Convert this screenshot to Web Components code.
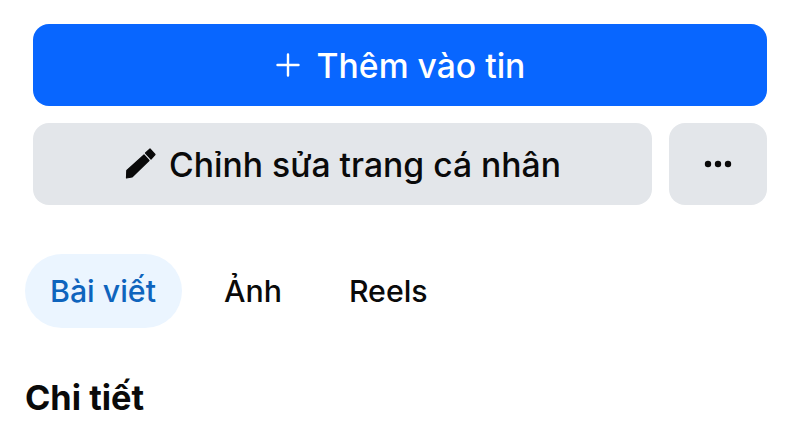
<!DOCTYPE html>
<html lang="vi">
<head>
<meta charset="utf-8">
<title>Trang cá nhân</title>
<style>
    html, body { margin: 0; background: #ffffff; }
    body { font-family: Inter, "Noto Sans", sans-serif; }
</style>
</head>
<body>
<profile-panel>
    <action-row>
        <action-button variant="primary" grow>
            <svg slot="icon" width="26" height="26" viewBox="0 0 26 26"><path d="M13 2.500V23.500M2.500 13H23.500" stroke="#fff" stroke-width="2.400" stroke-linecap="round" fill="none"/></svg>
            Thêm vào tin
        </action-button>
    </action-row>
    <action-row>
        <action-button grow>
            <svg slot="icon" width="34" height="34" viewBox="0 0 34 34"><path d="M2.800 23.500L20 8 25 13.500 8 30 2.500 31Z M21.500 6L26 2 31 7.500 27 12Z" fill="#0a0a0a" stroke="#0a0a0a" stroke-width="1.200" stroke-linejoin="round"/></svg>
            Chỉnh sửa trang cá nhân
        </action-button>
        <action-button square>
            <svg width="28" height="8" viewBox="0 0 28 8"><circle cx="4" cy="4" r="3.200" fill="#0a0a0a"/><circle cx="14" cy="4" r="3.200" fill="#0a0a0a"/><circle cx="24" cy="4" r="3.200" fill="#0a0a0a"/></svg>
        </action-button>
    </action-row>
    <tab-bar>
        <tab-item active>Bài viết</tab-item>
        <tab-item>Ảnh</tab-item>
        <tab-item>Reels</tab-item>
    </tab-bar>
    <section-title>Chi tiết</section-title>
</profile-panel>

<script>
(function () {

    function define(name, css, html) {
        const template = document.createElement('template');
        template.innerHTML = `<style>${css}</style>${html}`;
        customElements.define(name, class extends HTMLElement {
            constructor() {
                super();
                this.attachShadow({ mode: 'open' });
                this.shadowRoot.appendChild(template.content.cloneNode(true));
            }
        });
    }

    define('profile-panel', `
        :host {
            display: flex;
            flex-direction: column;
            box-sizing: border-box;
            width: 800px;
            height: 440px;
            padding: 24px 33px 0 33px;
            overflow: hidden;
            color: #0a0a0a;
        }
    `, `<slot></slot>`);

    define('action-row', `
        :host {
            display: flex;
            gap: 17px;
            margin-bottom: 17px;
        }
    `, `<slot></slot>`);

    define('action-button', `
        :host {
            display: flex;
            align-items: center;
            justify-content: center;
            gap: 11px;
            height: 82px;
            border-radius: 16px;
            background: #e3e6ea;
            color: #0a0a0a;
            font-size: 33.700px;
            font-weight: 500;
        }
        :host([grow]) { flex: 1; }
        :host([square]) { width: 98px; gap: 0; }
        :host([variant="primary"]) {
            background: #0866ff;
            color: #ffffff;
            gap: 16px;
        }
        slot[name="icon"] { display: flex; }
    `, `<slot name="icon"></slot><slot></slot>`);

    define('tab-bar', `
        :host {
            display: flex;
            align-items: center;
            gap: 17px;
            margin: 32px 0 0 -8px;
        }
    `, `<slot></slot>`);

    define('tab-item', `
        :host {
            display: flex;
            align-items: center;
            height: 74px;
            padding: 0 25px;
            border-radius: 37px;
            font-size: 30.300px;
            font-weight: 500;
            color: #0a0a0a;
        }
        :host([active]) {
            padding-right: 26px;
            background: #ebf5ff;
            color: #0e64bd;
        }
    `, `<slot></slot>`);

    define('section-title', `
        :host {
            display: block;
            margin: 50px 0 0 -8px;
            font-size: 34.300px;
            line-height: 40px;
            font-weight: 700;
            color: #0a0a0a;
        }
    `, `<slot></slot>`);

})();
</script>
</body>
</html>
